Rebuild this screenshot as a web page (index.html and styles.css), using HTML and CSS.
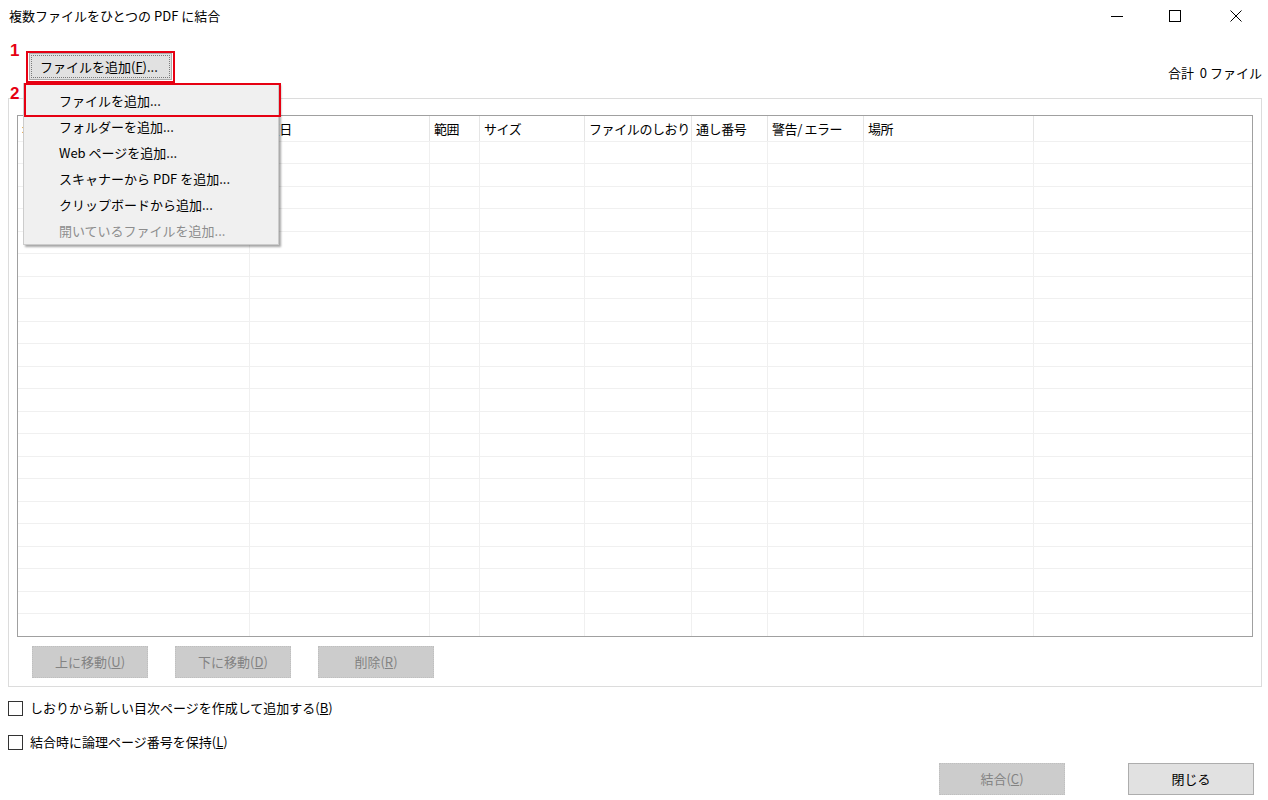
FILE: index.html
```html
<!DOCTYPE html>
<html>
<head>
    <meta charset="utf-8">
    <title>複数ファイルをひとつの PDF に結合</title>
    <link rel="stylesheet" href="styles.css">
</head>
<body>
    <div class="window">
        <div class="titlebar">
            <span class="title">複数ファイルをひとつの PDF に結合</span>
            <div class="controls">
                <span class="ctl"><svg width="12" height="12" viewBox="0 0 12 12"><path d="M0 6.5h12" stroke="#000" stroke-width="1"/></svg></span>
                <span class="ctl"><svg width="12" height="12" viewBox="0 0 12 12"><rect x="0.5" y="0.5" width="11" height="11" fill="none" stroke="#000" stroke-width="1"/></svg></span>
                <span class="ctl"><svg width="12" height="12" viewBox="0 0 12 12"><path d="M0.5 0.5l11 11M11.5 0.5l-11 11" stroke="#000" stroke-width="1"/></svg></span>
            </div>
        </div>

        <div class="toolbar">
            <button class="btn add-btn"><span class="focus">ファイルを追加(<u>F</u>)...</span></button>
            <span class="total">合計&nbsp; 0 ファイル</span>
        </div>

        <div class="group">
            <div class="list">
                <div class="list-head">
                    <div class="col">名前</div>
                    <div class="col">変更日</div>
                    <div class="col">範囲</div>
                    <div class="col">サイズ</div>
                    <div class="col">ファイルのしおり</div>
                    <div class="col">通し番号</div>
                    <div class="col">警告/&nbsp;エラー</div>
                    <div class="col">場所</div>
                    <div class="col last"></div>
                </div>
                <div class="list-body">
                    <div class="col"></div>
                    <div class="col"></div>
                    <div class="col"></div>
                    <div class="col"></div>
                    <div class="col"></div>
                    <div class="col"></div>
                    <div class="col"></div>
                    <div class="col"></div>
                    <div class="col last"></div>
                </div>
            </div>
            <div class="list-buttons">
                <button class="btn disabled">上に移動(<u>U</u>)</button>
                <button class="btn disabled">下に移動(<u>D</u>)</button>
                <button class="btn disabled">削除(<u>R</u>)</button>
            </div>
        </div>

        <label class="check"><span class="box"></span>しおりから新しい目次ページを作成して追加する(<u>B</u>)</label>
        <label class="check second"><span class="box"></span>結合時に論理ページ番号を保持(<u>L</u>)</label>

        <div class="footer">
            <button class="btn disabled">結合(<u>C</u>)</button>
            <button class="btn">閉じる</button>
        </div>

        <div class="menu">
            <div class="item">ファイルを追加...</div>
            <div class="item">フォルダーを追加...</div>
            <div class="item">Web ページを追加...</div>
            <div class="item">スキャナーから PDF を追加...</div>
            <div class="item">クリップボードから追加...</div>
            <div class="item off">開いているファイルを追加...</div>
        </div>

        <span class="step step1">1</span>
        <span class="step step2">2</span>
        <div class="mark mark1"></div>
        <div class="mark mark2"></div>
    </div>
</body>
</html>
```

FILE: styles.css
```css
html, body {
    margin: 0;
    padding: 0;
}

body {
    background: white;
    font-family: "Noto Sans CJK JP", "Noto Sans", sans-serif;
    font-size: 13px;
    color: #000;
}

.window {
    position: relative;
    width: 1268px;
    height: 800px;
    overflow: hidden;
}

.titlebar {
    height: 32px;
    display: flex;
    align-items: center;
    justify-content: space-between;
}

.title {
    padding-left: 9px;
    line-height: 16px;
}

.controls {
    display: flex;
    height: 32px;
}

.ctl {
    width: 58px;
    display: flex;
    align-items: center;
    justify-content: center;
}

.ctl:last-child {
    width: 64px;
}

.toolbar {
    height: 66px;
    display: flex;
    align-items: flex-start;
    justify-content: space-between;
    padding: 21px 6px 0 29px;
    box-sizing: border-box;
}

.btn {
    font-family: inherit;
    font-size: 13px;
    color: #000;
    background: #e1e1e1;
    border: 1px solid #adadad;
    height: 32px;
    width: 116px;
    padding: 0;
    line-height: 16px;
}

.btn.disabled {
    background: #cccccc;
    border: 1px dotted #bfbfbf;
    color: #838383;
}

.add-btn {
    width: 143px;
    height: 27px;
    padding: 1px;
}

.add-btn .focus {
    display: flex;
    align-items: center;
    padding-left: 8px;
    height: 100%;
    border: 1px dotted #7a7a7a;
    box-sizing: border-box;
}

.total {
    margin-top: 12px;
    line-height: 16px;
}

.group {
    margin: 0 6px 0 8px;
    height: 589px;
    border: 1px solid #dcdcdc;
    padding: 16px 8px 0 8px;
    box-sizing: border-box;
}

.list {
    height: 522px;
    box-sizing: border-box;
    border: 1px solid #a0a0a0;
    display: flex;
    flex-direction: column;
}

.list-head,
.list-body {
    display: grid;
    grid-template-columns: 232px 180px 50px 105px 107px 76px 96px 170px 1fr;
}

.list-head {
    height: 25px;
    border-bottom: 1px solid #f0f0f0;
}

.list-head .col {
    border-right: 1px solid #e5e5e5;
    padding-left: 4px;
    line-height: 25px;
    white-space: nowrap;
    letter-spacing: -0.4px;
    overflow: hidden;
}

.list-body {
    flex: 1;
    background: repeating-linear-gradient(to bottom,
        white 0, white 21px, #f0f0f0 21px, #f0f0f0 22px,
        white 22px, white 44px, #f0f0f0 44px, #f0f0f0 45px);
}

.list-body .col {
    border-right: 1px solid #f0f0f0;
}

.list-head .last,
.list-body .last {
    border-right: none;
}

.list-buttons {
    display: flex;
    gap: 27px;
    padding: 9px 0 0 15px;
}

.check {
    display: flex;
    align-items: center;
    height: 16px;
    margin: 13px 0 0 8px;
    line-height: 16px;
}

.check.second {
    margin-top: 18px;
}

.box {
    width: 13px;
    height: 13px;
    border: 1px solid #333;
    margin-right: 7px;
    background: white;
}

.footer {
    display: flex;
    justify-content: flex-end;
    gap: 63px;
    padding: 13px 14px 0 0;
}

.footer .btn {
    width: 126px;
}

.menu {
    position: absolute;
    left: 23px;
    top: 83px;
    width: 256px;
    height: 162px;
    background: #f0f0f0;
    border: 1px solid #cccccc;
    box-shadow: 2px 2px 2px rgba(0, 0, 0, 0.35);
    padding-top: 4px;
    box-sizing: border-box;
}

.item {
    height: 26px;
    line-height: 26px;
    padding-left: 35px;
}

.item.off {
    color: #8d8d8d;
}

.step {
    position: absolute;
    color: #e60012;
    font-family: "Liberation Sans", Arial, sans-serif;
    font-weight: bold;
    font-size: 17px;
    line-height: 17px;
}

.step1 {
    left: 10px;
    top: 42px;
}

.step2 {
    left: 10px;
    top: 85px;
}

.mark {
    position: absolute;
    border: 2px solid #e60012;
    box-sizing: border-box;
}

.mark1 {
    left: 26px;
    top: 51px;
    width: 149px;
    height: 32px;
}

.mark2 {
    left: 24px;
    top: 83px;
    width: 257px;
    height: 34px;
}
```
